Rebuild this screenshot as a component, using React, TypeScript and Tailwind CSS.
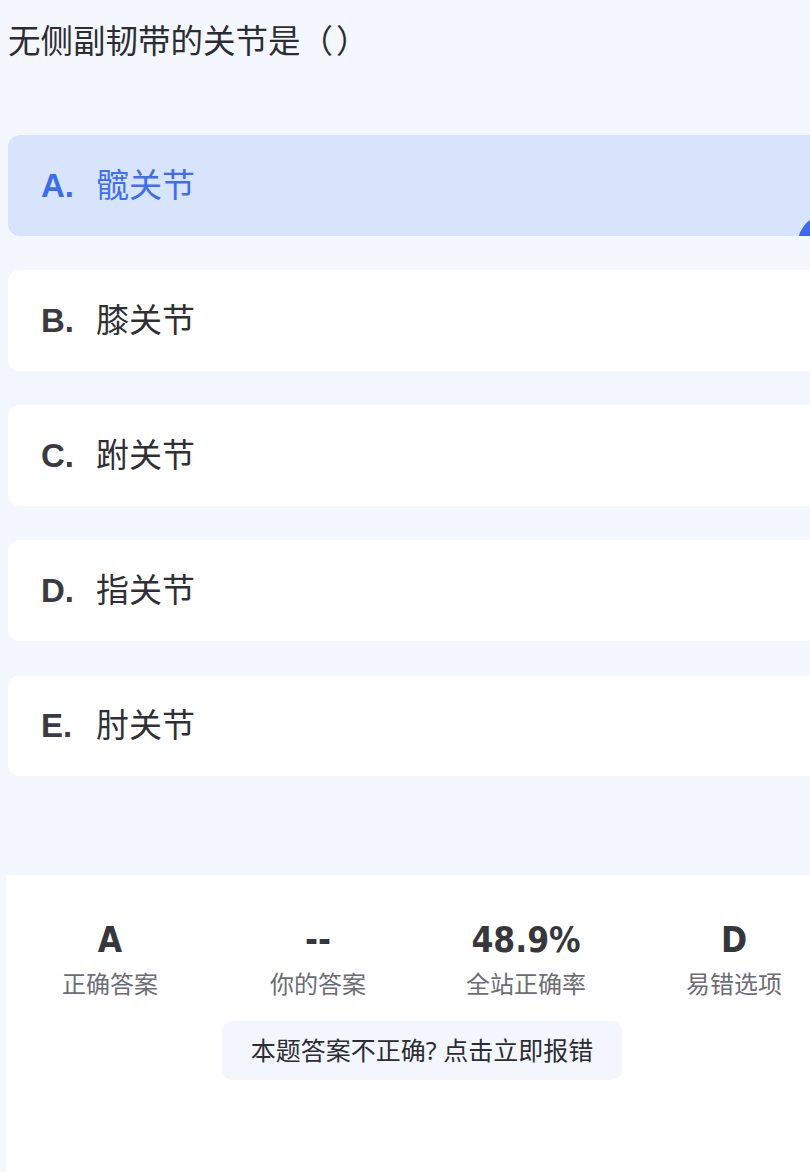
const options = [
  { key: 'A', text: '髋关节', selected: true },
  { key: 'B', text: '膝关节' },
  { key: 'C', text: '跗关节' },
  { key: 'D', text: '指关节' },
  { key: 'E', text: '肘关节' },
];

const stats = [
  { value: 'A', label: '正确答案' },
  { value: '--', label: '你的答案' },
  { value: '48.9%', label: '全站正确率' },
  { value: 'D', label: '易错选项' },
];

const font = { fontFamily: '"Noto Sans", "Noto Sans CJK SC", sans-serif' };

export default function App() {
  return (
    <div className="w-[810px] h-[1172px] overflow-hidden bg-[#f4f7fe]" style={font}>
      <div className="w-[844px] h-full flex flex-col">
        <h1 className="pl-[8px] pt-[20px] text-[32.5px] leading-[42px] text-[#2b2d33]">
          无侧副韧带的关节是<span className="tracking-[3px]">（）</span>
        </h1>

        <div className="mt-[73px] px-[8px] flex flex-col gap-[34px]">
          {options.map((o) => (
            <div
              key={o.key}
              className={`relative overflow-hidden h-[101px] rounded-[12px] flex items-center pl-[33px] ${
                o.selected ? 'bg-[#d8e3fc] text-[#3f6df0]' : 'bg-white text-[#2f3035]'
              }`}
            >
              <div className="flex items-baseline leading-[44px]">
                <span
                  className={`w-[55px] text-[33px] font-bold ${o.selected ? 'text-[#3a6cf0]' : 'text-[#3a3b40]'}`}
                  style={{ fontFamily: '"Liberation Sans", Arial, sans-serif' }}
                >
                  {o.key}.
                </span>
                <span className="text-[33px]">{o.text}</span>
              </div>
              {o.selected && (
                <div className="absolute right-[-18px] top-[80px] w-[56px] h-[56px] rounded-full bg-[#3d69f2]" />
              )}
            </div>
          ))}
        </div>

        <div className="mt-[99px] mx-[6px] flex-1 bg-white flex flex-col items-center">
          <div className="w-full grid grid-cols-4 pt-[42px]">
            {stats.map((s) => (
              <div key={s.label} className="flex flex-col items-center">
                <span
                  className="text-[35px] font-bold leading-[46px] text-[#36373c]"
                  style={{ fontFamily: '"DejaVu Sans Condensed", "Liberation Sans", sans-serif' }}
                >
                  {s.value}
                </span>
                <span className="mt-[5px] text-[24px] leading-[32px] text-[#6b6d73]">{s.label}</span>
              </div>
            ))}
          </div>
          <button className="mt-[21px] h-[59px] px-[29px] rounded-[10px] bg-[#f4f6fd] text-[25px] text-[#2b2d33]">
            本题答案不正确? 点击立即报错
          </button>
        </div>
      </div>
    </div>
  );
}
